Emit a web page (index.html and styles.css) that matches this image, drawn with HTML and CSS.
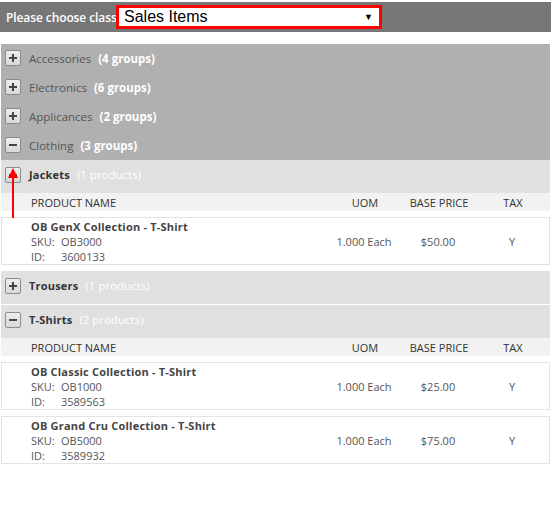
FILE: index.html
```html
<!DOCTYPE html>
<html>
<head>
<meta charset="utf-8">
<link rel="stylesheet" href="styles.css">
</head>
<body>
<div class="topbar">
  <span class="label">Please choose class</span>
  <div class="select"><span>Sales Items</span><span class="caret">&#9660;</span></div>
</div>
<div class="tree">
  <div class="cat"><span class="tog plus"></span><span class="name">Accessories</span><span class="count">(4 groups)</span></div>
  <div class="cat"><span class="tog plus"></span><span class="name">Electronics</span><span class="count">(6 groups)</span></div>
  <div class="cat"><span class="tog plus"></span><span class="name">Applicances</span><span class="count">(2 groups)</span></div>
  <div class="cat"><span class="tog minus"></span><span class="name">Clothing</span><span class="count">(3 groups)</span></div>

  <div class="grp"><span class="tog minus"></span><span class="name">Jackets</span><span class="count">(1 products)</span></div>
  <div class="thead"><span class="c-name">PRODUCT NAME</span><span class="c-col">UOM</span><span class="c-col">BASE PRICE</span><span class="c-col">TAX</span></div>
  <div class="prod">
    <div class="c-name">
      <div class="pname">OB GenX Collection - T-Shirt</div>
      <div><span class="lbl">SKU:</span>OB3000</div>
      <div><span class="lbl">ID:</span>3600133</div>
    </div>
    <span class="c-col">1.000 Each</span><span class="c-col">$50.00</span><span class="c-col">Y</span>
  </div>

  <div class="grp first-after"><span class="tog plus"></span><span class="name">Trousers</span><span class="count">(1 products)</span></div>
  <div class="grp sep"><span class="tog minus"></span><span class="name">T-Shirts</span><span class="count">(2 products)</span></div>
  <div class="thead"><span class="c-name">PRODUCT NAME</span><span class="c-col">UOM</span><span class="c-col">BASE PRICE</span><span class="c-col">TAX</span></div>
  <div class="prod">
    <div class="c-name">
      <div class="pname">OB Classic Collection - T-Shirt</div>
      <div><span class="lbl">SKU:</span>OB1000</div>
      <div><span class="lbl">ID:</span>3589563</div>
    </div>
    <span class="c-col">1.000 Each</span><span class="c-col">$25.00</span><span class="c-col">Y</span>
  </div>
  <div class="prod">
    <div class="c-name">
      <div class="pname">OB Grand Cru Collection - T-Shirt</div>
      <div><span class="lbl">SKU:</span>OB5000</div>
      <div><span class="lbl">ID:</span>3589932</div>
    </div>
    <span class="c-col">1.000 Each</span><span class="c-col">$75.00</span><span class="c-col">Y</span>
  </div>
</div>
<svg class="arrow" width="12" height="50" viewBox="0 0 12 50"><polygon points="6,0 1,10 11,10" fill="#f00"/><rect x="5" y="8" width="2" height="42" fill="#f00"/></svg>
</body>
</html>
```
FILE: styles.css
```css
html, body { margin: 0; padding: 0; background: #fff; }
body {
  padding-top: 2px;
  font-family: "Open Sans", "Lato", sans-serif;
  color: #444;
  position: relative;
}
.topbar {
  height: 30px;
  background: #777;
  display: flex;
  align-items: center;
  padding-left: 6px;
}
.label {
  color: #fff;
  font-size: 12px;
  font-weight: 600;
  white-space: nowrap;
  width: 110px;
  letter-spacing: -0.1px;
}
.select {
  box-sizing: border-box;
  width: 266px;
  height: 24px;
  border: 3px solid #f00;
  background: #fff;
  display: flex;
  align-items: center;
  justify-content: space-between;
  padding: 0 6px 0 5px;
  font-family: "Liberation Sans", Arial, sans-serif;
  font-size: 16px;
  color: #000;
}
.caret { font-size: 9px; }
.tree { margin: 12px 1px 0; }
.cat, .grp {
  box-sizing: border-box;
  display: flex;
  align-items: center;
  padding-left: 4px;
  font-size: 11.5px;
}
.cat { height: 29px; background: #b0b0b0; color: #555; padding-bottom: 1px; }
.grp { height: 33px; background: #e0e0e0; color: #333; padding-bottom: 4px; }
.grp .name { font-weight: 700; font-size: 11px; letter-spacing: 0.2px; }
.grp.first-after { margin-top: 6px; }
.grp.sep { height: 34px; border-top: 1px solid #fff; }
.count { color: #fff; font-weight: 700; margin-left: 7px; }
.grp .count { font-weight: 400; }
.tog {
  box-sizing: border-box;
  width: 16px;
  height: 16px;
  border: 1px solid #8c8c8c;
  border-radius: 2px;
  background: linear-gradient(#eee, #d8d8d8);
  margin-right: 8px;
  position: relative;
  flex: none;
}
.tog::before {
  content: "";
  position: absolute;
  left: 3px; right: 3px; top: 6px;
  height: 2px;
  background: #444;
}
.tog.plus::after {
  content: "";
  position: absolute;
  top: 3px; bottom: 3px; left: 6px;
  width: 2px;
  background: #444;
}
.thead {
  display: flex;
  align-items: center;
  height: 18px;
  background: #f2f2f2;
  font-size: 11px;
  color: #333;
}
.c-name { flex: 1; padding-left: 30px; }
.c-col { width: 74px; text-align: center; }
.prod {
  box-sizing: border-box;
  display: flex;
  align-items: center;
  border: 1px solid #e3e3e3;
  margin-top: 6px;
  height: 48px;
  font-size: 11px;
  color: #555;
}
.prod .c-name { line-height: 15px; padding-left: 29px; }
.pname { font-weight: 700; color: #444; letter-spacing: 0.2px; }
.lbl { display: inline-block; width: 30px; }
.arrow {
  position: absolute;
  left: 7px;
  top: 168px;
}
```
